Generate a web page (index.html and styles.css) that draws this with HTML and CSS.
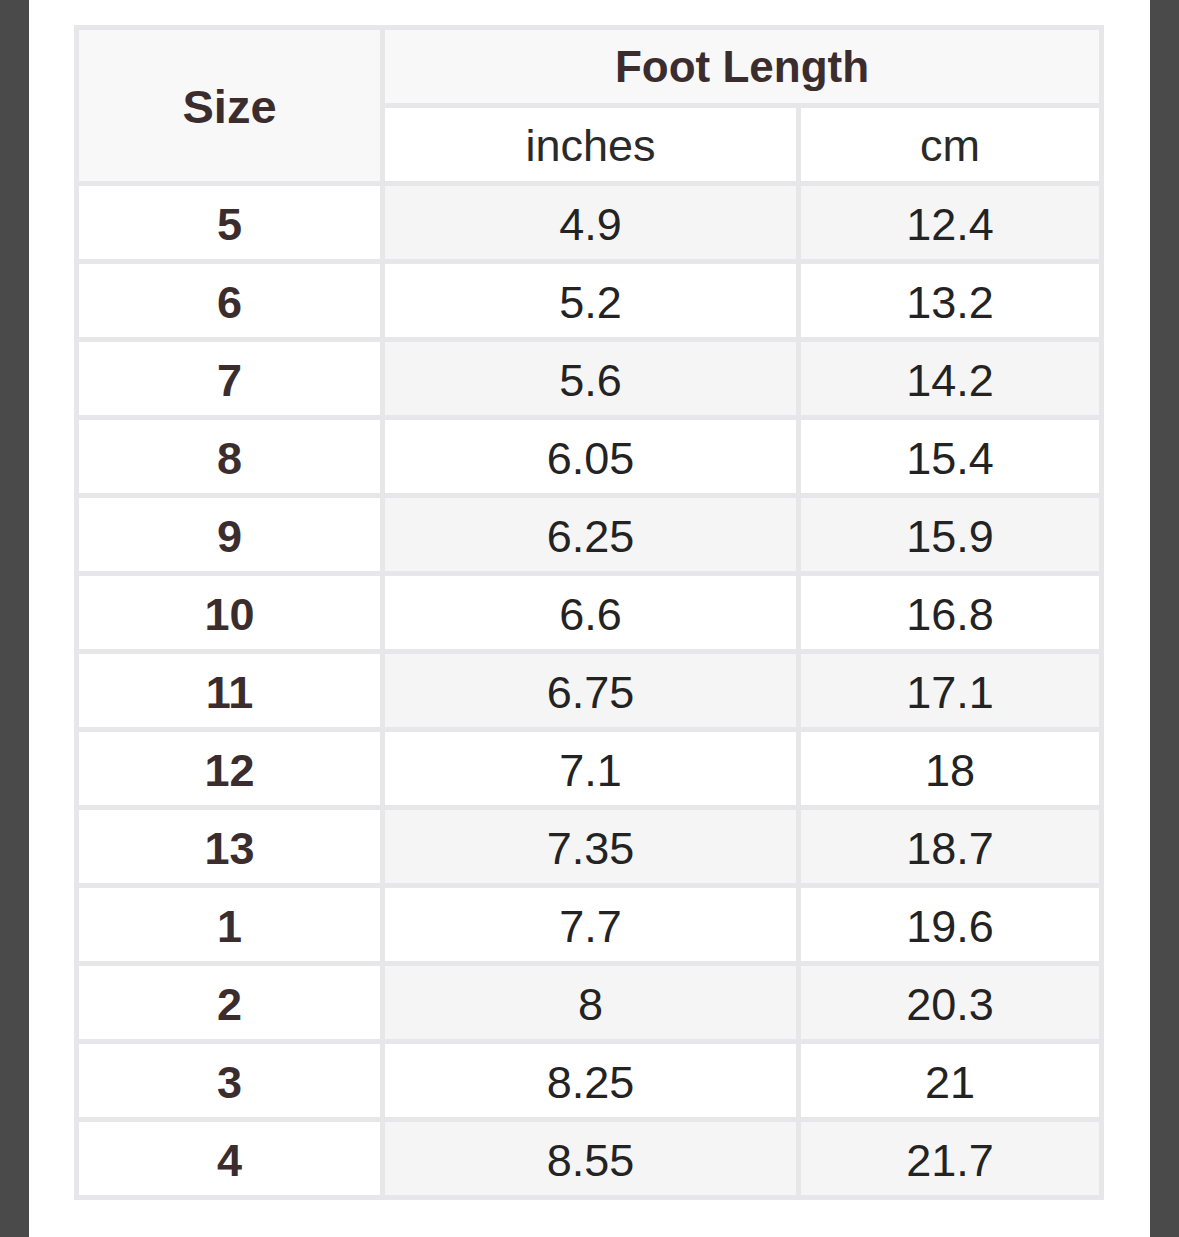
FILE: index.html
```html
<!DOCTYPE html>
<html>
<head>
<meta charset="utf-8">
<link rel="stylesheet" href="styles.css">
</head>
<body>
<div class="page">
  <div class="side"></div>
  <main class="content">
    <table class="chart">
      <colgroup>
        <col class="c1"><col class="c2"><col class="c3">
      </colgroup>
      <thead>
        <tr>
          <th rowspan="2" class="hd size">Size</th>
          <th colspan="2" class="hd foot">Foot Length</th>
        </tr>
        <tr>
          <th class="unit">inches</th>
          <th class="unit">cm</th>
        </tr>
      </thead>
      <tbody>
        <tr class="odd"><th>5</th><td>4.9</td><td>12.4</td></tr>
        <tr><th>6</th><td>5.2</td><td>13.2</td></tr>
        <tr class="odd"><th>7</th><td>5.6</td><td>14.2</td></tr>
        <tr><th>8</th><td>6.05</td><td>15.4</td></tr>
        <tr class="odd"><th>9</th><td>6.25</td><td>15.9</td></tr>
        <tr><th>10</th><td>6.6</td><td>16.8</td></tr>
        <tr class="odd"><th>11</th><td>6.75</td><td>17.1</td></tr>
        <tr><th>12</th><td>7.1</td><td>18</td></tr>
        <tr class="odd"><th>13</th><td>7.35</td><td>18.7</td></tr>
        <tr><th>1</th><td>7.7</td><td>19.6</td></tr>
        <tr class="odd"><th>2</th><td>8</td><td>20.3</td></tr>
        <tr><th>3</th><td>8.25</td><td>21</td></tr>
        <tr class="odd"><th>4</th><td>8.55</td><td>21.7</td></tr>
      </tbody>
    </table>
  </main>
  <div class="side"></div>
</div>
</body>
</html>
```

FILE: styles.css
```css
html, body {
  margin: 0;
  padding: 0;
  background: #ffffff;
}

.page {
  display: flex;
  width: 1179px;
  height: 1237px;
  overflow: hidden;
  font-family: "Liberation Sans", Arial, sans-serif;
}

.side {
  width: 29px;
  flex: none;
  background: #4a4a4a;
}

.content {
  flex: 1;
  background: #ffffff;
  padding: 25px 0 0 45px;
}

.chart {
  border-collapse: separate;
  border-spacing: 5px;
  background: #e7e7e9;
  table-layout: fixed;
  width: 1030px;
}

.c1 { width: 301px; }
.c2 { width: 411px; }
.c3 { width: 298px; }

.chart th,
.chart td {
  height: 69px;
  padding: 4px 0 0;
  text-align: center;
  vertical-align: middle;
  font-size: 45px;
  line-height: 1;
  background: #ffffff;
}

.chart th {
  font-weight: bold;
  color: #3b2d2e;
}

.chart td {
  font-weight: normal;
  color: #232323;
}

.chart th.hd {
  background: #f8f8f8;
  padding-top: 0;
}

.chart th.size {
  font-size: 47px;
  padding-top: 2px;
}

.chart th.foot {
  font-size: 44px;
  height: 73px;
}

.chart th.unit {
  font-weight: normal;
  color: #2a2a2a;
  background: #ffffff;
  padding-top: 1px;
  height: 72px;
}

.chart tr.odd td {
  background: #f5f5f5;
}
```
